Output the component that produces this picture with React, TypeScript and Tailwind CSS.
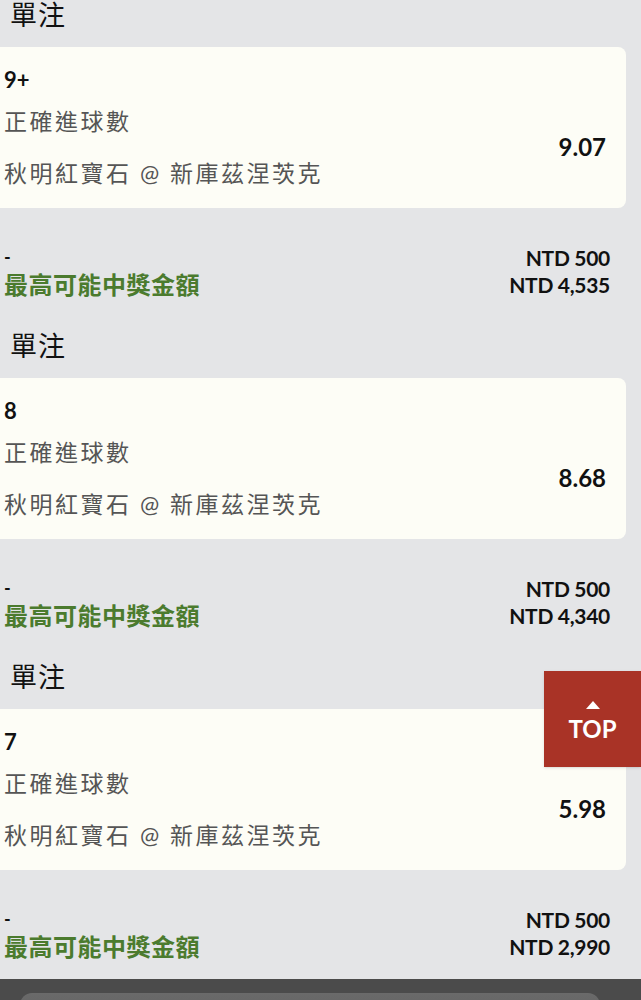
import React from 'react';

interface Bet {
  pick: string;
  market: string;
  match: string;
  odds: string;
  stake: string;
  payout: string;
}

const bets: Bet[] = [
  { pick: '9+', market: '正確進球數', match: '秋明紅寶石 @ 新庫茲涅茨克', odds: '9.07', stake: 'NTD 500', payout: 'NTD 4,535' },
  { pick: '8', market: '正確進球數', match: '秋明紅寶石 @ 新庫茲涅茨克', odds: '8.68', stake: 'NTD 500', payout: 'NTD 4,340' },
  { pick: '7', market: '正確進球數', match: '秋明紅寶石 @ 新庫茲涅茨克', odds: '5.98', stake: 'NTD 500', payout: 'NTD 2,990' },
];

const font = { fontFamily: 'Lato, "Noto Sans CJK TC", sans-serif' };

const BetSection = ({ bet, first }: { bet: Bet; first: boolean }) => {
  return (
    <div className="w-[626px]">
      <div
        className={
          first
            ? 'mb-[17px] pl-[10px] text-[27px] leading-[30px] tracking-[1px] text-[#111]'
            : 'mt-[33px] mb-[17px] pl-[10px] text-[27px] leading-[30px] tracking-[1px] text-[#111]'
        }
      >
        單注
      </div>

      <div className="flex h-[161px] flex-col rounded-r-lg bg-[#fdfdf6] pt-[20px] pr-[20px] pl-[4px]">
        <div className="text-[22px] leading-[26px] font-bold text-[#111]">{bet.pick}</div>
        <div className="mt-[13px] flex items-center justify-between">
          <div className="flex flex-col text-[23px] tracking-[2.5px] text-[#555]">
            <span className="leading-[30px]">{bet.market}</span>
            <span className="mt-[22px] leading-[30px]">{bet.match}</span>
          </div>
          <div className="text-[24px] leading-[30px] font-bold text-[#111]">{bet.odds}</div>
        </div>
      </div>

      <div className="mt-[36px] flex items-end justify-between pr-[16px] pl-[4px]">
        <div className="flex flex-col">
          <span className="text-[18px] leading-[27px] font-bold text-[#111]">-</span>
          <span className="text-[24px] leading-[27px] font-bold tracking-[0.5px] text-[#4b7b2e]">最高可能中獎金額</span>
        </div>
        <div className="flex flex-col items-end text-[21px] font-bold tracking-[-0.3px] text-[#111]">
          <span className="leading-[27px]">{bet.stake}</span>
          <span className="leading-[27px]">{bet.payout}</span>
        </div>
      </div>
    </div>
  );
};

const App = () => {
  return (
    <div className="relative h-[1000px] w-[641px] overflow-hidden bg-[#e4e5e7]" style={font}>
      {bets.map((bet, i) => (
        <BetSection key={i} bet={bet} first={i === 0} />
      ))}

      <div className="mt-[19px] h-[60px] bg-[#4b4b4b] px-[20px] pt-[14px]">
        <div className="h-[50px] w-[580px] rounded-xl bg-gradient-to-b from-[#6a6a6a] to-[#5a5a5a]" />
      </div>

      <button className="absolute top-[671px] right-0 flex h-[96px] w-[97px] flex-col items-center justify-center bg-[#a93326] text-white shadow-sm">
        <svg width="14" height="8" viewBox="0 0 14 8" className="mt-[4px] mb-[8px]">
          <path d="M7 0 L14 8 L0 8 Z" fill="white" />
        </svg>
        <span className="text-[24px] leading-[24px] font-bold">TOP</span>
      </button>
    </div>
  );
};

export default App;
